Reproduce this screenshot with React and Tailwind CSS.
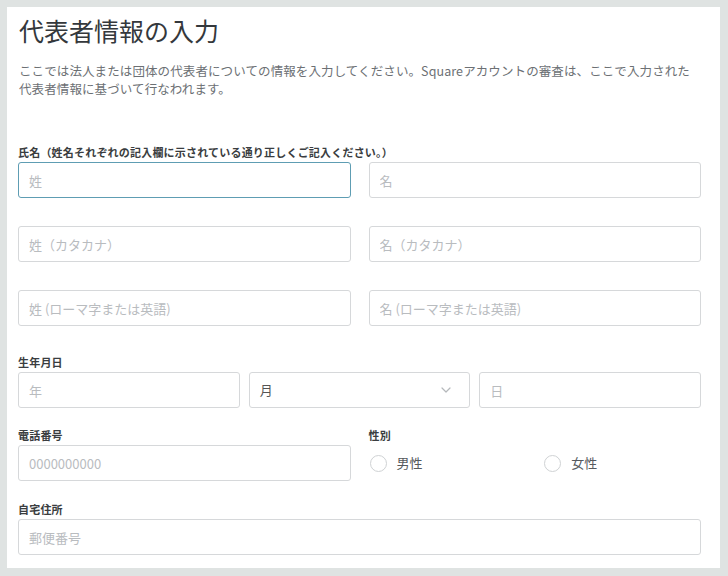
const field =
  "w-full h-[36px] rounded-[3px] border border-[#d6d8da] bg-white px-[10px] text-[13px] text-[#555] placeholder:text-[#b9bcbf] outline-none";

function Label({ children, className = "" }) {
  return (
    <div className={`text-[11px] leading-[14px] font-bold tracking-[0.2px] text-[#3a3d40] mb-[3px] ${className}`}>
      {children}
    </div>
  );
}

function Radio({ label }) {
  return (
    <label className="flex items-center gap-[10px] h-[36px] cursor-pointer">
      <span className="w-[17px] h-[17px] rounded-full border border-[#cfd2d4] bg-white" />
      <span className="text-[13px] text-[#55595d]">{label}</span>
    </label>
  );
}

export default function App() {
  return (
    <div
      className="w-[728px] h-[576px] bg-[#dfe3e2] pt-[7px] pl-[7px] pr-[8px] pb-[8px]"
      style={{ fontFamily: '"Noto Sans CJK JP", "Noto Sans", sans-serif' }}
    >
      <div className="h-full bg-white pl-[11px] pr-[19px] pt-[8px]">
        <h1 className="text-[25px] leading-[30px] text-[#34383c] ml-[1px]">代表者情報の入力</h1>
        <p className="mt-[17px] text-[12.5px] leading-[18px] tracking-[0.1px] text-[#6c7074] ml-[1px]">
          ここでは法人または団体の代表者についての情報を入力してください。Squareアカウントの審査は、ここで入力された
          <br />
          代表者情報に基づいて行なわれます。
        </p>

        <Label className="mt-[47px]">氏名（姓名それぞれの記入欄に示されている通り正しくご記入ください。）</Label>
        <div className="grid grid-cols-2 gap-x-[18px] gap-y-[28px]">
          <input className={`${field} !border-[#5e9db3]`} placeholder="姓" />
          <input className={field} placeholder="名" />
          <input className={field} placeholder="姓（カタカナ）" />
          <input className={field} placeholder="名（カタカナ）" />
          <input className={field} placeholder="姓 (ローマ字または英語)" />
          <input className={field} placeholder="名 (ローマ字または英語)" />
        </div>

        <Label className="mt-[29px]">生年月日</Label>
        <div className="grid grid-cols-3 gap-[9px]">
          <input className={field} placeholder="年" />
          <div className={`${field} flex items-center justify-between pr-[18px]`}>
            <span>月</span>
            <svg width="10" height="6" viewBox="0 0 10 6" fill="none">
              <path d="M1 1l4 4 4-4" stroke="#b5b8bb" strokeWidth="1.2" strokeLinecap="round" strokeLinejoin="round" />
            </svg>
          </div>
          <input className={field} placeholder="日" />
        </div>

        <div className="grid grid-cols-2 gap-x-[18px] mt-[20px]">
          <div>
            <Label>電話番号</Label>
            <input className={field} placeholder="0000000000" />
          </div>
          <div>
            <Label>性別</Label>
            <div className="grid grid-cols-2 gap-x-[18px] pl-[1px]">
              <Radio label="男性" />
              <Radio label="女性" />
            </div>
          </div>
        </div>

        <Label className="mt-[21px]">自宅住所</Label>
        <input className={field} placeholder="郵便番号" />
      </div>
    </div>
  );
}
